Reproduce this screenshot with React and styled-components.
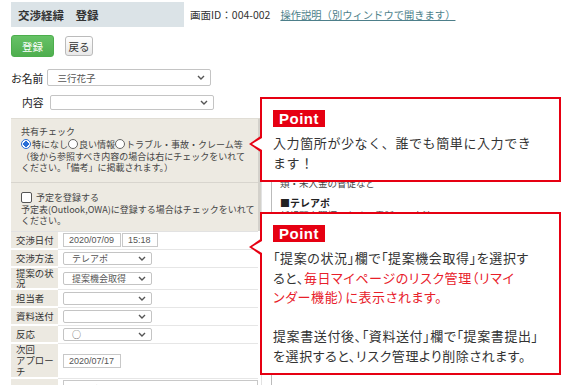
import React from 'react'
import styled, { createGlobalStyle } from 'styled-components'

const GlobalStyle = createGlobalStyle`
  html, body {
    margin: 0;
    padding: 0;
    background: #fff;
  }
  body {
    font-family: 'Liberation Sans', 'Noto Sans CJK JP', sans-serif;
    color: #333;
    overflow: hidden;
  }
`

const Chevron = () => (
  <svg width='8' height='5' viewBox='0 0 8 5'>
    <path d='M1 1 L4 4 L7 1' fill='none' stroke='#555' strokeWidth='1.4' />
  </svg>
)

const App = () => (
  <Page>
    <GlobalStyle />
    <Header>
      <TitleBox>交渉経緯　登録</TitleBox>
      <ScreenId>画面ID：004-002</ScreenId>
      <HelpLink href='#'>操作説明（別ウィンドウで開きます）</HelpLink>
    </Header>

    <Toolbar>
      <Button primary>登録</Button>
      <Button>戻る</Button>
    </Toolbar>

    <FieldRow>
      <FieldLabel>お名前</FieldLabel>
      <Select width={164} height={17}>
        <span>三行花子</span>
        <Chevron />
      </Select>
    </FieldRow>
    <FieldRow indent={11} gap={6}>
      <FieldLabel>内容</FieldLabel>
      <Select width={164} height={15}>
        <span />
        <Chevron />
      </Select>
    </FieldRow>

    <Main>
      <LeftCol>
        <SharePanel>
          <PanelSection>
            <PanelLine>共有チェック</PanelLine>
            <RadioLine>
              <Radio checked />特になし<Radio />良い情報<Radio />トラブル・事故・クレーム等
            </RadioLine>
            <PanelLine>（後から参照すべき内容の場合は右にチェックをいれて</PanelLine>
            <PanelLine>ください。「備考」に掲載されます。）</PanelLine>
          </PanelSection>
          <PanelSection divided>
            <RadioLine>
              <Checkbox />予定を登録する
            </RadioLine>
            <PanelLine>予定表(Outlook,OWA)に登録する場合はチェックをいれて</PanelLine>
            <PanelLine>ください。</PanelLine>
          </PanelSection>
        </SharePanel>

        <Table>
          <Row>
            <LabelCell>交渉日付</LabelCell>
            <ValueCell>
              <Input width={58}>2020/07/09</Input>
              <Input width={36}>15:18</Input>
            </ValueCell>
          </Row>
          <Row>
            <LabelCell>交渉方法</LabelCell>
            <ValueCell>
              <Select width={89} height={13} small>
                <span>テレアポ</span>
                <Chevron />
              </Select>
            </ValueCell>
          </Row>
          <Row>
            <LabelCell>提案の状<br />況</LabelCell>
            <ValueCell>
              <Select width={89} height={13} small>
                <span>提案機会取得</span>
                <Chevron />
              </Select>
            </ValueCell>
          </Row>
          <Row>
            <LabelCell>担当者</LabelCell>
            <ValueCell>
              <Select width={89} height={13} small>
                <span />
                <Chevron />
              </Select>
            </ValueCell>
          </Row>
          <Row>
            <LabelCell>資料送付</LabelCell>
            <ValueCell>
              <Select width={89} height={13} small>
                <span />
                <Chevron />
              </Select>
            </ValueCell>
          </Row>
          <Row>
            <LabelCell>反応</LabelCell>
            <ValueCell>
              <Select width={89} height={13} small>
                <span>○</span>
                <Chevron />
              </Select>
            </ValueCell>
          </Row>
          <Row>
            <LabelCell tall>次回<br />アプロー<br />チ</LabelCell>
            <ValueCell>
              <Input width={58}>2020/07/17</Input>
            </ValueCell>
          </Row>
          <Row>
            <LabelCell tall />
            <ValueCell top>
              <TextArea>【目的】</TextArea>
            </ValueCell>
          </Row>
        </Table>
      </LeftCol>

      <RightCol>
        <NoteBlock>
          <p>■交渉方法について</p>
          <p>訪問・電話・メールなど、顧客と</p>
          <p>接触した方法を選択してください。</p>
          <p>■その他</p>
          <p>類・未入金の督促など</p>
        </NoteBlock>
        <NoteBlock>
          <NoteHead>■テレアポ</NoteHead>
          <p>新規顧客開拓のための電話での交渉</p>
        </NoteBlock>
      </RightCol>
    </Main>

    <Callout top={97} height={85} arrowTop={36}>
      <PointTag>Point</PointTag>
      <CalloutText spacing={0.6}>
        <span>入力箇所が少なく、誰でも簡単に入力でき</span>
        <span>ます！</span>
      </CalloutText>
    </Callout>

    <Callout top={212} height={163} arrowTop={24}>
      <PointTag>Point</PointTag>
      <CalloutText spacing={0.6} palt>
        <span>「提案の状況」欄で「提案機会取得」を選択す</span>
        <span>ると、<Em>毎日マイページのリスク管理（リマイ</Em></span>
        <span><Em>ンダー機能）に表示されます。</Em></span>
        <Blank />
        <span>提案書送付後、「資料送付」欄で「提案書提出」</span>
        <span>を選択すると、リスク管理より削除されます。</span>
      </CalloutText>
    </Callout>
  </Page>
)

export default App

const Page = styled.div`
  position: relative;
  width: 563px;
  height: 385px;
  overflow: hidden;
  padding-left: 11px;
  box-sizing: border-box;
  font-family: 'Noto Sans CJK JP', sans-serif;
`
const Header = styled.div`
  display: flex;
  align-items: center;
  padding-top: 2px;
  height: 25px;
`
const TitleBox = styled.div`
  width: 173px;
  height: 25px;
  box-sizing: border-box;
  padding-left: 7px;
  background: #dbe3e7;
  display: flex;
  align-items: center;
  font-size: 11.5px;
  font-weight: bold;
  color: #333;
`
const ScreenId = styled.span`
  margin-left: 6px;
  font-size: 10.5px;
  color: #333;
`
const HelpLink = styled.a`
  margin-left: 10px;
  font-size: 10.3px;
  color: #4d7f8a;
  text-decoration: underline;
`
const Toolbar = styled.div`
  display: flex;
  align-items: center;
  gap: 11px;
  margin-top: 8px;
`
const Button = styled.button`
  font-family: 'Noto Sans CJK JP', sans-serif;
  font-size: 10.5px;
  padding: 0;
  border-radius: 3px;
  cursor: pointer;
  width: ${props => (props.primary ? '43px' : '28px')};
  height: ${props => (props.primary ? '22px' : '20px')};
  color: ${props => (props.primary ? '#fff' : '#333')};
  border: 1px solid ${props => (props.primary ? '#4cae4c' : '#bbb')};
  background: ${props =>
    props.primary
      ? 'linear-gradient(#66c266, #4fae4f)'
      : 'linear-gradient(#fff, #e8e8e8)'};
`
const FieldRow = styled.div`
  display: flex;
  align-items: center;
  gap: ${props => props.gap || 4}px;
  padding-left: ${props => props.indent || 0}px;
  margin-top: ${props => (props.indent ? 8 : 12)}px;
`
const FieldLabel = styled.span`
  font-size: 10.8px;
  color: #222;
`
const Select = styled.div`
  width: ${props => props.width}px;
  height: ${props => props.height}px;
  box-sizing: border-box;
  border: 1px solid #c4c4c4;
  border-radius: 2px;
  background: #fff;
  display: flex;
  align-items: center;
  justify-content: space-between;
  padding: 0 5px 0 ${props => (props.small ? 8 : 9)}px;
  font-size: ${props => (props.small ? 9 : 9.5)}px;
  color: #555;
  span {
    white-space: nowrap;
  }
`
const Main = styled.div`
  display: flex;
  margin-top: 8px;
`
const LeftCol = styled.div`
  width: 250px;
  border-right: 1px solid #e2e2e2;
  min-height: 280px;
`
const SharePanel = styled.div`
  background: #edeae2;
  border-right: 3px solid #d3d1cb;
  border-top: 1px solid #e0ddd5;
`
const PanelSection = styled.div`
  padding: ${props => (props.divided ? '8px 10px 4px' : '7px 10px 8px')};
  border-top: ${props => (props.divided ? '1px solid #d8d5ce' : 'none')};
`
const PanelLine = styled.div`
  font-size: 9px;
  line-height: 11.5px;
  color: #444;
  white-space: nowrap;
`
const RadioLine = styled.div`
  display: flex;
  align-items: center;
  font-size: 9px;
  line-height: 13px;
  color: #444;
  white-space: nowrap;
`
const Radio = styled.span`
  display: inline-block;
  width: 8px;
  height: 8px;
  border-radius: 50%;
  margin-right: 1px;
  border: 1px solid ${props => (props.checked ? '#2a6fd6' : '#666')};
  background: ${props =>
    props.checked
      ? 'radial-gradient(circle, #2a6fd6 0 45%, #fff 50% 100%)'
      : '#fff'};
`
const Checkbox = styled.span`
  display: inline-block;
  width: 9px;
  height: 9px;
  border: 1px solid #555;
  border-radius: 2px;
  background: #fff;
  margin-right: 4px;
`
const Table = styled.div`
  width: 247px;
  border-top: 1px solid #e2e2e2;
`
const Row = styled.div`
  display: grid;
  grid-template-columns: 47px 1fr;
`
const LabelCell = styled.div`
  background: #ece9e1;
  border-bottom: 2px solid #fff;
  padding: 0 5px;
  font-size: 9.4px;
  line-height: ${props => (props.tall ? 11 : 10)}px;
  color: #333;
  min-height: 16px;
  display: flex;
  flex-direction: column;
  justify-content: center;
  white-space: nowrap;
`
const ValueCell = styled.div`
  display: flex;
  align-items: ${props => (props.top ? 'flex-start' : 'center')};
  padding: 1px 5px;
  border-bottom: 1px solid #e6e6e6;
`
const Input = styled.div`
  width: ${props => props.width}px;
  height: 14px;
  box-sizing: border-box;
  border: 1px solid #c8c8c8;
  display: flex;
  align-items: center;
  padding-left: 5px;
  font-family: 'Liberation Sans', sans-serif;
  font-size: 9px;
  color: #555;
  margin-right: 1px;
`
const TextArea = styled.div`
  width: 195px;
  height: 30px;
  box-sizing: border-box;
  border: 1px solid #c8c8c8;
  padding: 2px 9px;
  font-size: 9px;
  color: #555;
`
const RightCol = styled.div`
  margin-left: 9px;
  border-left: 1px solid #bbb;
  padding: 11px 0 0 8px;
  flex: 1;
  min-height: 280px;
`
const NoteBlock = styled.div`
  margin-bottom: 8px;
  p {
    margin: 0;
    font-size: 9.5px;
    line-height: 12px;
    color: #444;
    white-space: nowrap;
  }
`
const NoteHead = styled.p`
  && {
    font-weight: bold;
    font-size: 10px;
    color: #222;
  }
`
const Callout = styled.div`
  position: absolute;
  left: 260px;
  top: ${props => props.top}px;
  width: 301px;
  height: ${props => props.height}px;
  box-sizing: border-box;
  border: 2px solid #e60012;
  background: #fff;
  padding: 11px 11px;
  &::before,
  &::after {
    content: '';
    position: absolute;
    border-style: solid;
    border-color: transparent;
  }
  &::before {
    left: -13px;
    top: ${props => props.arrowTop}px;
    border-width: 9px 13px 9px 0;
    border-right-color: #e60012;
  }
  &::after {
    left: -10px;
    top: ${props => props.arrowTop + 2.5}px;
    border-width: 6.5px 10px 6.5px 0;
    border-right-color: #fff;
  }
`
const PointTag = styled.div`
  width: fit-content;
  background: #e60012;
  color: #fff;
  font-family: 'Liberation Sans', sans-serif;
  font-weight: bold;
  font-size: 15px;
  line-height: 17px;
  padding: 0 6px 0 6px;
  letter-spacing: 0.5px;
`
const CalloutText = styled.div`
  display: flex;
  flex-direction: column;
  margin-top: 6px;
  font-size: 13px;
  line-height: 19.5px;
  color: #333;
  letter-spacing: ${props => props.spacing}px;
  font-feature-settings: ${props => (props.palt ? '"palt"' : 'normal')};
  span {
    white-space: nowrap;
  }
`
const Em = styled.span`
  color: #e8202a;
`
const Blank = styled.div`
  height: 19.5px;
`
